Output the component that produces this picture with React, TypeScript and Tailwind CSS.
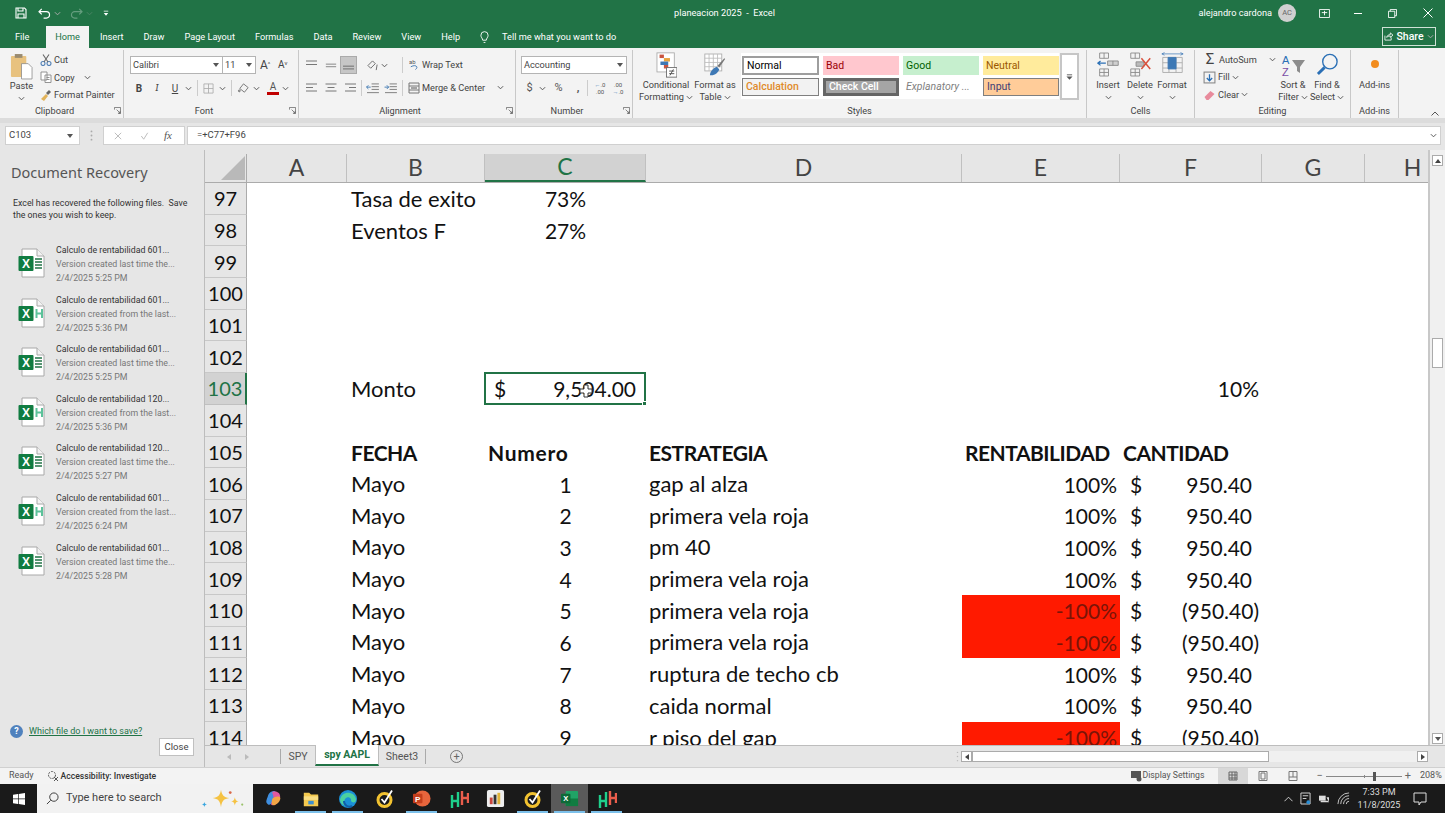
import React from "react";

const UI = "font-['Roboto',sans-serif]";
const SHEET = "font-['Lato',sans-serif]";

function Chev({ className = "" }: { className?: string }) {
  return (
    <svg viewBox="0 0 8 5" className={`w-[7px] h-[5px] shrink-0 ${className}`} fill="none" stroke="#555" strokeWidth="1.1">
      <path d="M1 1l3 3 3-3" />
    </svg>
  );
}
function Down({ className = "" }: { className?: string }) {
  return (
    <svg viewBox="0 0 6 4" className={`w-[6px] h-[4px] shrink-0 ${className}`} fill="#555">
      <path d="M0 0h6L3 4z" />
    </svg>
  );
}
function Lines({ rows, thick }: { rows: number[]; thick?: number }) {
  return (
    <svg viewBox="0 0 14 12" className="w-[14px] h-[12px]" fill="none" stroke="#777" strokeWidth="1">
      {rows.map((w, i) => (
        <path key={i} d={`M${thick === 1 ? 14 - w : thick === 2 ? (14 - w) / 2 : 0} ${2 + i * 3.5}h${w}`} />
      ))}
    </svg>
  );
}

function GroupLabel({ label, launcher }: { label: string; launcher?: boolean }) {
  return (
    <div className={`relative h-[14px] flex items-center justify-center text-[9.2px] leading-none text-[#444] ${launcher ? "pr-[14px]" : ""}`}>
      {label}
      {launcher && (
        <svg viewBox="0 0 8 8" className="absolute right-[2px] top-[3px] w-[7px] h-[7px]" fill="none" stroke="#666" strokeWidth="0.9">
          <path d="M0.5 3V0.5H7.5V7.5H5M3 3l4 4M7 4.5V7H4.5" />
        </svg>
      )}
    </div>
  );
}

function Group({ w, label, launcher, children }: { w: number; label: string; launcher?: boolean; children: React.ReactNode }) {
  return (
    <div style={{ width: w }} className="h-[68px] shrink-0 flex flex-col border-r border-[#c8c8c8]">
      <div className="flex-1 min-h-0 flex">{children}</div>
      <GroupLabel label={label} launcher={launcher} />
    </div>
  );
}

function BigBtn({ w, icon, l1, l2 }: { w: number; icon: React.ReactNode; l1: string; l2?: string }) {
  return (
    <div style={{ width: w }} className="shrink-0 flex flex-col items-center text-[9.2px] leading-[12px] text-[#444]">
      <div className="h-[28px] flex items-center justify-center">{icon}</div>
      <div className="whitespace-nowrap mt-[1px]">{l1}</div>
      {l2 ? (
        <div className="flex items-center gap-[2px] whitespace-nowrap">
          {l2}
          <Chev />
        </div>
      ) : (
        <div className="h-[12px] flex items-center"><Chev /></div>
      )}
    </div>
  );
}

function StyleBox({ label, cls }: { label: string; cls: string }) {
  return <div className={`w-[76px] flex items-center px-[3px] text-[10.5px] whitespace-nowrap overflow-hidden ${cls}`}>{label}</div>;
}

function CellsIcon({ kind }: { kind: string }) {
  return (
    <svg viewBox="0 0 26 28" className="w-[23px] h-[25px]" fill="none" stroke="#888" strokeWidth="1">
      {kind === "insert" && (
        <>
          <path d="M3 1h10v6H3zM8 1v6M3 19h10v8H3zM8 19v8M3 23h10" />
          <path d="M12 10h12v5H12zM18 10v5" fill="#cfcfcf" />
          <path d="M1 12.5h9M4 10l-3 2.5L4 15" stroke="#2a6fb5" strokeWidth="1.4" />
        </>
      )}
      {kind === "delete" && (
        <>
          <path d="M2 1h10v6H2zM7 1v6M2 19h10v8H2zM7 19v8M2 23h10" />
          <path d="M8 11h9v5H8z" fill="#bbb" />
          <path d="M14 7l10 12M24 7L14 19" stroke="#d9513d" strokeWidth="1.7" />
        </>
      )}
      {kind === "format" && (
        <>
          <path d="M2 6h22v17H2zM2 12h22M2 18h22M9 6v17M17 6v17" stroke="#aaa" />
          <path d="M8 6h9v13H8z" fill="#3e79b5" stroke="#3e79b5" />
          <path d="M1 2h24M1 2l3-1.5M1 2l3 1.5M25 2l-3-1.5M25 2l-3 1.5" stroke="#3e79b5" strokeWidth="0.8" />
        </>
      )}
    </svg>
  );
}

function Ribbon() {
  return (
    <div className={`h-[70px] bg-[#f3f3f3] flex pt-[2px] ${UI}`}>
      {/* Clipboard */}
      <Group w={124} label="Clipboard" launcher>
        <div className="w-[40px] pl-[3px] flex flex-col items-center text-[9.2px] text-[#444] leading-[12px]">
          <svg viewBox="0 0 24 28" className="w-[23px] h-[27px] mt-[3px]">
            <rect x="1" y="3" width="16" height="22" rx="1" fill="#e8c27f" />
            <rect x="5" y="1" width="8" height="4" fill="#9a8b70" />
            <path d="M12 11h7l4 4v12H12z" fill="#fff" stroke="#888" strokeWidth="0.8" />
          </svg>
          <div>Paste</div>
          <div className="h-[12px] flex items-center"><Chev /></div>
        </div>
        <div className="flex flex-col text-[9.2px] text-[#444] leading-[17px] pt-[1px]">
          <div className="flex items-center gap-[2px] h-[17.5px]">
            <svg viewBox="0 0 12 12" className="w-[12px] h-[12px]" fill="none" stroke="#4f7fb5" strokeWidth="1.1"><circle cx="3" cy="9.5" r="2" /><circle cx="9" cy="9.500" r="2" /><path d="M4 8L9 0.5M8 8L3 0.5" stroke="#666" /></svg>
            Cut
          </div>
          <div className="flex items-center gap-[2px] h-[17.5px]">
            <svg viewBox="0 0 12 12" className="w-[12px] h-[12px]" fill="#fff" stroke="#888" strokeWidth="0.9"><path d="M1 1h6v8H1zM5 4h6v7.5H5z" /><path d="M6.5 6.5h3M6.5 8.5h3" /></svg>
            <span>Copy</span>
            <Chev className="ml-[7px]" />
          </div>
          <div className="flex items-center gap-[2px] h-[17.5px] whitespace-nowrap">
            <svg viewBox="0 0 12 12" className="w-[12px] h-[12px]"><path d="M1 10l5-5 2 2-4 5z" fill="#e2b35a" /><path d="M6 4l3-3 2 2-3 3z" fill="#666" /></svg>
            Format Painter
          </div>
        </div>
      </Group>

      {/* Font */}
      <Group w={175} label="Font" launcher>
        <div className="pl-[6px] pt-[6px] flex flex-col">
          <div className="flex items-center h-[18px]">
            <div className="w-[93px] h-[18px] bg-white border border-[#b4b4b4] flex items-center justify-between px-[2px] text-[9.2px] text-[#444]">Calibri<Down className="mr-[1px]" /></div>
            <div className="w-[33px] h-[18px] bg-white border border-l-0 border-[#b4b4b4] flex items-center justify-between px-[2px] text-[9.2px] text-[#444]">11<Down className="mr-[1px]" /></div>
            <span className="ml-[4px] text-[12px] text-[#444] w-[18px] leading-none">A<sup className="text-[6px]">^</sup></span>
            <span className="text-[10px] text-[#444] leading-none">A<sup className="text-[6px]">v</sup></span>
          </div>
          <div className="flex items-center h-[18px] mt-[5px] text-[10px] text-[#444]">
            <b className="w-[18px] text-center">B</b>
            <i className="w-[18px] text-center font-serif">I</i>
            <u className="w-[18px] text-center">U</u>
            <Chev className="ml-[1px]" />
            <div className="w-px h-[16px] bg-[#ccc] ml-[5px]" />
            <svg viewBox="0 0 12 12" className="w-[11px] h-[11px] ml-[5px]" fill="none" stroke="#aaa" strokeWidth="0.9"><path d="M1 1h10v10H1zM6 1v10M1 6h10" /></svg>
            <Chev className="ml-[5px]" />
            <div className="w-px h-[16px] bg-[#ccc] ml-[5px]" />
            <svg viewBox="0 0 14 14" className="w-[13px] h-[13px] ml-[5px]" fill="none" stroke="#666" strokeWidth="0.9"><path d="M3 7l4-5 5 4-4 5z" /><path d="M1 13h10" stroke="#f2f2f2" strokeWidth="2" /><circle cx="2.5" cy="9.5" r="1" fill="#bbb" /></svg>
            <Chev className="ml-[3px]" />
            <span className="ml-[7px] w-[12px] flex flex-col items-center leading-[10px] text-[#555]">A<span className="block w-[12px] h-[3px] bg-[#c00000]" /></span>
            <Chev className="ml-[3px]" />
          </div>
        </div>
      </Group>

      {/* Alignment */}
      <Group w={217} label="Alignment" launcher>
        <div className="pl-[5px] pt-[5px] flex flex-col">
          <div className="flex items-center h-[20px]">
            <div className="w-[18px] flex justify-center"><Lines rows={[11, 11]} /></div>
            <div className="w-[18px] flex justify-center"><svg viewBox="0 0 14 12" className="w-[12px] h-[12px]" fill="none" stroke="#777"><path d="M1 5h12M1 8h12" /></svg></div>
            <div className="w-[17px] h-[18px] bg-[#c6c6c6] border border-[#aaa] flex items-end justify-center pb-[2px]"><svg viewBox="0 0 12 6" className="w-[11px] h-[6px]" fill="none" stroke="#666"><path d="M0 1h12M0 4h12" /></svg></div>
            <div className="w-[24px] flex justify-center ml-[8px] items-center gap-[2px]">
              <svg viewBox="0 0 13 12" className="w-[12px] h-[11px]" fill="none" stroke="#666"><path d="M1 6l5-5 3 3-5 5zM11 5l-1 6" /></svg>
              <Chev />
            </div>
            <div className="w-px h-[16px] bg-[#ccc] ml-[13px]" />
            <div className="ml-[6px] flex items-center gap-[2px] text-[9.2px] text-[#444] whitespace-nowrap">
              <svg viewBox="0 0 12 13" className="w-[11px] h-[13px]" fill="none" stroke="#666"><text x="0" y="6" fontSize="6.5" fill="#555" stroke="none">ab</text><path d="M2 9c5-3 9 0 5 3" stroke="#3c76b0" /></svg>
              Wrap Text
            </div>
          </div>
          <div className="flex items-center h-[20px] mt-[3px]">
            <div className="w-[18px] flex justify-center"><Lines rows={[11, 7, 11]} /></div>
            <div className="w-[18px] flex justify-center"><Lines rows={[11, 7, 11]} thick={2} /></div>
            <div className="w-[17px] flex justify-center"><Lines rows={[11, 7, 11]} thick={1} /></div>
            <div className="w-px h-[16px] bg-[#ccc] ml-[4px]" />
            <div className="w-[18px] flex justify-center ml-[1px]"><svg viewBox="0 0 14 12" className="w-[13px] h-[11px]" fill="none" stroke="#777"><path d="M6 1h8M6 4h8M6 7h8M1 10.5h13" /><path d="M5 4.5H0.5M2.5 2.5l-2 2 2 2" stroke="#3c76b0" /></svg></div>
            <div className="w-[18px] flex justify-center"><svg viewBox="0 0 14 12" className="w-[13px] h-[11px]" fill="none" stroke="#777"><path d="M6 1h8M6 4h8M6 7h8M1 10.5h13" /><path d="M0.5 4.5H5M3 2.5l2 2-2 2" stroke="#3c76b0" /></svg></div>
            <div className="w-px h-[16px] bg-[#ccc] ml-[3px]" />
            <div className="ml-[5px] flex items-center gap-[2px] text-[9.2px] text-[#444] whitespace-nowrap">
              <svg viewBox="0 0 12 12" className="w-[12px] h-[12px]" fill="none" stroke="#777"><path d="M1 1h10v10H1zM1 4h10M1 8h10" /><path d="M3 6h6" stroke="#555" /></svg>
              Merge &amp; Center
              <Chev className="ml-[10px]" />
            </div>
          </div>
        </div>
      </Group>

      {/* Number */}
      <Group w={117} label="Number" launcher>
        <div className="pl-[5px] pt-[6px] flex flex-col">
          <div className="w-[106px] h-[18px] bg-white border border-[#b4b4b4] flex items-center justify-between px-[2px] text-[9.2px] text-[#444]">Accounting<Down className="mr-[1px]" /></div>
          <div className="flex items-center h-[18px] mt-[5px] text-[11px] text-[#555]">
            <span className="ml-[4px] w-[9px] text-center">$</span>
            <Chev className="ml-[5px]" />
            <span className="ml-[6px] w-[13px] text-center">%</span>
            <b className="ml-[10px] w-[6px] text-center">,</b>
            <div className="w-px h-[16px] bg-[#ccc] ml-[6px]" />
            <span className="ml-[5px] w-[14px] text-[6px] leading-[7px] text-center"><span className="text-[#3c76b0]">←</span>.0<br />.00</span>
            <span className="ml-[4px] w-[14px] text-[6px] leading-[7px] text-center">.00<br /><span className="text-[#3c76b0]">→</span>.0</span>
          </div>
        </div>
      </Group>

      {/* Styles */}
      <Group w={454} label="Styles">
        <div className="pl-[6px] flex">
          <BigBtn
            w={54}
            l1="Conditional"
            l2="Formatting"
            icon={
              <svg viewBox="0 0 24 30" className="w-[21px] h-[26px] mt-[1px]">
                <rect x="1" y="1" width="20" height="22" fill="#fff" stroke="#aaa" />
                <rect x="4" y="3" width="5" height="4" fill="#c9553f" />
                <rect x="9" y="7" width="7" height="4" fill="#e8a33d" />
                <rect x="5" y="11" width="9" height="4" fill="#3e79b5" />
                <rect x="9" y="15" width="5" height="4" fill="#c9553f" />
                <rect x="12" y="18" width="12" height="11" fill="#fff" stroke="#666" />
                <path d="M15 22h6M15 25h6M20 20l-4 7" stroke="#444" fill="none" />
              </svg>
            }
          />
          <BigBtn
            w={44}
            l1="Format as"
            l2="Table"
            icon={
              <svg viewBox="0 0 26 30" className="w-[22px] h-[26px] mt-[1px]">
                <rect x="1" y="2" width="20" height="20" fill="#fff" stroke="#aaa" />
                <path d="M1 7h20M1 12h20M1 17h20M6 2v20M11 2v20M16 2v20" stroke="#bbb" fill="none" />
                <path d="M7 27c0-5 5-9 8-10l3 3c-1 4-6 8-11 7z" fill="#3e79b5" />
                <path d="M16 16l8-9 1 1-7 10z" fill="#777" />
              </svg>
            }
          />
          <div className="ml-[4px] mt-[3px] w-[318px] h-[46px] bg-white flex flex-col gap-[3px] pl-[1px] pt-[3px]">
            <div className="flex gap-[4px] h-[19px]">
              <StyleBox label="Normal" cls="bg-white border-2 border-[#9e9e9e] text-black !w-[77px]" />
              <StyleBox label="Bad" cls="bg-[#ffc7ce] text-[#9c0006]" />
              <StyleBox label="Good" cls="bg-[#c6efce] text-[#006100]" />
              <StyleBox label="Neutral" cls="bg-[#ffeb9c] text-[#9c5700]" />
            </div>
            <div className="flex gap-[4px] h-[18px]">
              <StyleBox label="Calculation" cls="bg-[#f2f2f2] border border-[#7f7f7f] text-[#e08a2a] font-medium !w-[77px]" />
              <StyleBox label="Check Cell" cls="bg-[#a5a5a5] border-[3px] border-[#666] text-white font-medium" />
              <StyleBox label="Explanatory ..." cls="bg-white text-[#7f7f7f] italic" />
              <StyleBox label="Input" cls="bg-[#ffcc99] border border-[#7f7f7f] text-[#3f3f76]" />
            </div>
          </div>
          <div className="w-[19px] h-[47px] mt-[3px] ml-[1px] border-2 border-[#c6c6c6] bg-white flex flex-col items-center justify-center">
            <svg viewBox="0 0 8 6" className="w-[7px] h-[6px]"><path d="M1 0.5h6" stroke="#555" /><path d="M0.5 2.5h7L4 6z" fill="#555" /></svg>
          </div>
        </div>
      </Group>

      {/* Cells */}
      <Group w={108} label="Cells">
        <div className="pl-[5px] flex">
          <BigBtn w={32} l1="Insert" icon={<CellsIcon kind="insert" />} />
          <BigBtn w={32} l1="Delete" icon={<CellsIcon kind="delete" />} />
          <BigBtn w={32} l1="Format" icon={<CellsIcon kind="format" />} />
        </div>
      </Group>

      {/* Editing */}
      <Group w={156} label="Editing">
        <div className="pl-[8px] flex">
          <div className="w-[73px] flex flex-col text-[9.2px] text-[#444] pt-[1px]">
            <div className="h-[17.5px] flex items-center gap-[2px]"><span className="w-[14px] text-[15px] leading-none text-center text-[#444]">Σ</span>AutoSum<Chev className="ml-[10px]" /></div>
            <div className="h-[17.5px] flex items-center gap-[2px]">
              <svg viewBox="0 0 12 12" className="w-[13px] h-[13px]" fill="none"><rect x="1" y="1" width="10" height="10" stroke="#888" /><path d="M6 3v6M3.5 6.5L6 9l2.5-2.5" stroke="#2a6fb5" strokeWidth="1.2" /></svg>
              Fill<Chev />
            </div>
            <div className="h-[17.5px] flex items-center gap-[2px]">
              <svg viewBox="0 0 12 12" className="w-[13px] h-[12px]"><path d="M1 8l6-6 4 3-6 6H3z" fill="#e88b9c" /></svg>
              Clear<Chev />
            </div>
          </div>
          <BigBtn
            w={34}
            l1="Sort &"
            l2="Filter"
            icon={
              <svg viewBox="0 0 24 24" className="w-[24px] h-[24px] mt-[1px]">
                <text x="1" y="11" fontSize="11" fill="#2a6fb5" fontFamily="Liberation Sans">A</text>
                <text x="1" y="23" fontSize="11" fill="#7a4ea5" fontFamily="Liberation Sans">Z</text>
                <path d="M11 7h13l-5 7v6l-3-2v-4z" fill="#8c8c8c" />
              </svg>
            }
          />
          <BigBtn
            w={34}
            l1="Find &"
            l2="Select"
            icon={
              <svg viewBox="0 0 24 24" className="w-[23px] h-[23px] mt-[1px]" fill="none">
                <circle cx="14.5" cy="9" r="7.5" stroke="#2a6fb5" strokeWidth="1.4" />
                <path d="M9 15l-7 7" stroke="#2a6fb5" strokeWidth="3" />
              </svg>
            }
          />
        </div>
      </Group>

      {/* Add-ins */}
      <Group w={48} label="Add-ins">
        <div className="w-full flex flex-col items-center text-[9.2px] text-[#444] leading-[12px]">
          <div className="h-[28px] flex items-center"><span className="block w-[8px] h-[8px] rounded-full bg-[#f28c1e]" /></div>
          <span className="mt-[1px]">Add-ins</span>
        </div>
      </Group>
      <div className="flex-1 relative">
        <svg viewBox="0 0 8 5" className="absolute right-[6px] bottom-[2px] w-[8px] h-[5px]" fill="none" stroke="#555"><path d="M0.5 4.5L4 1l3.5 3.5" /></svg>
      </div>
    </div>
  );
}

function TitleBar() {
  return (
    <div className={`h-[26px] flex items-center text-white ${UI}`}>
      <div className="w-[674px] flex items-center pl-[15px]">
        <svg viewBox="0 0 12 12" className="w-[12px] h-[12px]" fill="none" stroke="#fff" strokeWidth="1.1"><path d="M1 1h8.5L11 2.5V11H1zM3 1v3h5V1M3 11V7h6v4" /></svg>
        <svg viewBox="0 0 14 12" className="w-[13px] h-[11px] ml-[11px]" fill="none" stroke="#fff" strokeWidth="1.3"><path d="M4 1L1 4l3 3M1 4h8a3.5 3.5 0 0 1 0 7H6" /></svg>
        <Chev className="ml-[3px] invert" />
        <svg viewBox="0 0 14 12" className="w-[13px] h-[11px] ml-[9px] opacity-30" fill="none" stroke="#fff" strokeWidth="1.3"><path d="M10 1l3 3-3 3M13 4H5a3.5 3.5 0 0 0 0 7h3" /></svg>
        <Chev className="ml-[3px] opacity-30 invert" />
        <svg viewBox="0 0 8 8" className="w-[6px] h-[6px] ml-[10px]" fill="#fff"><path d="M1 1h6v1H1zM1 4h6L4 7.5z" /></svg>
      </div>
      <div className="text-[9.2px] whitespace-nowrap">planeacion 2025 &nbsp;-&nbsp; Excel</div>
      <div className="ml-auto flex items-center">
        <span className="text-[9.2px] mr-[6px]">alejandro cardona</span>
        <span className="w-[18px] h-[18px] rounded-full bg-[#d0d0d0] text-[#666] text-[7.5px] flex items-center justify-center">AC</span>
        <svg viewBox="0 0 12 10" className="w-[11px] h-[9px] ml-[23px]" fill="none" stroke="#fff"><path d="M0.5 0.5h11v9H0.5z" /><path d="M3 4h6M6 2v5" /></svg>
        <div className="w-[8px] h-px bg-white ml-[24px]" />
        <svg viewBox="0 0 10 10" className="w-[9px] h-[9px] ml-[26px]" fill="none" stroke="#fff"><path d="M0.5 2.5h7v7h-7zM2.5 2.5v-2h7v7h-2" /></svg>
        <svg viewBox="0 0 10 10" className="w-[10px] h-[10px] ml-[26px] mr-[12px]" fill="none" stroke="#fff"><path d="M0.5 0.5l9 9M9.5 0.5l-9 9" /></svg>
      </div>
    </div>
  );
}

const TABS = ["Insert", "Draw", "Page Layout", "Formulas", "Data", "Review", "View", "Help"];

function TabBar() {
  return (
    <div className={`h-[22px] flex items-end text-[9.2px] text-white ${UI}`}>
      <div className="h-full flex items-center pl-[15px] w-[46px]">File</div>
      <div className="h-[22px] w-[43px] bg-[#f3f3f3] text-[#217346] flex items-center justify-center">Home</div>
      <div className="h-full flex items-center gap-[20px] pl-[11px]">
        {TABS.map((t) => (
          <span key={t} className="whitespace-nowrap">{t}</span>
        ))}
        <svg viewBox="0 0 10 14" className="w-[9px] h-[13px]" fill="none" stroke="#fff"><path d="M3 10c0-2-2-3-2-5.5a4 4 0 0 1 8 0C9 7 7 8 7 10zM4 12.5h2" /></svg>
        <span className="-ml-[7px] whitespace-nowrap">Tell me what you want to do</span>
      </div>
      <div className="ml-auto mr-[9px] mb-[1px] w-[54px] h-[19px] border border-[#cfe2d6] flex items-center justify-center gap-[3px] self-center">
        <svg viewBox="0 0 10 10" className="w-[9px] h-[9px]" fill="none" stroke="#fff" strokeWidth="0.9"><path d="M1 4v5h7V6M3 6c0-2 2-3 4-3V1l3 2.500L7 6V4.500C5 4.500 4 5 3 6z" /></svg>
        <span className="text-[10.5px] font-medium">Share</span>
        <Chev className="invert" />
      </div>
    </div>
  );
}

function FormulaBar() {
  return (
    <div className={`h-[32px] border-t-[5px] border-[#dcdcdc] bg-[#e6e6e6] flex items-start pt-[3px] text-[9.5px] text-[#444] pl-[5px] pr-[4px] ${UI}`}>
      <div className="w-[75px] h-[19px] bg-white border border-[#d0d0d0] flex items-center justify-between px-[3px]">C103<Down className="mr-[3px]" /></div>
      <svg viewBox="0 0 3 12" className="w-[3px] h-[11px] ml-[10px] mt-[4px]" fill="#aaa"><circle cx="1.5" cy="1.5" r="1" /><circle cx="1.5" cy="6" r="1" /><circle cx="1.5" cy="10.5" r="1" /></svg>
      <div className="w-[82px] h-[19px] ml-[10px] bg-white border border-[#d0d0d0] flex items-center">
        <svg viewBox="0 0 10 10" className="w-[8px] h-[8px] ml-[10px]" fill="none" stroke="#bbb" strokeWidth="1.2"><path d="M1 1l8 8M9 1l-8 8" /></svg>
        <svg viewBox="0 0 10 10" className="w-[9px] h-[8px] ml-[18px]" fill="none" stroke="#bbb" strokeWidth="1.2"><path d="M1 5l3 4 5-8" /></svg>
        <i className="ml-[15px] font-['Liberation_Serif',serif] text-[11px] text-[#555]">fx</i>
      </div>
      <div className="flex-1 h-[19px] ml-[2px] bg-white border border-[#d0d0d0] flex items-center justify-between pl-[9px] pr-[3px]">
        =+C77+F96
        <Chev />
      </div>
    </div>
  );
}

function ExcelFile({ h }: { h?: boolean }) {
  return (
    <svg viewBox="0 0 27 30" className="w-[27px] h-[30px] shrink-0">
      <path d="M4 1h15l7 7v21H4z" fill="#fff" stroke="#a8a8a8" />
      <path d="M19 1v7h7" fill="#f2f2f2" stroke="#a8a8a8" />
      {h ? (
        <path d="M18.5 11v9M24 11v9M18.5 15.5H24" stroke="#5cc29a" strokeWidth="2" fill="none" />
      ) : (
        <path d="M17 11h7M17 14h7M17 17h7M17 20h7" stroke="#217346" strokeWidth="1.4" />
      )}
      <rect x="0.5" y="8" width="15" height="15" rx="1" fill="#107c41" />
      <text x="8" y="20" fontSize="12" fontWeight="700" fill="#fff" textAnchor="middle" fontFamily="Liberation Sans">X</text>
    </svg>
  );
}

const RECOVERY: [string, string, string, boolean][] = [
  ["Calculo de rentabilidad 601...", "Version created last time the...", "2/4/2025 5:25 PM", false],
  ["Calculo de rentabilidad 601...", "Version created from the last...", "2/4/2025 5:36 PM", true],
  ["Calculo de rentabilidad 601...", "Version created last time the...", "2/4/2025 5:25 PM", false],
  ["Calculo de rentabilidad 120...", "Version created from the last...", "2/4/2025 5:36 PM", true],
  ["Calculo de rentabilidad 120...", "Version created last time the...", "2/4/2025 5:27 PM", false],
  ["Calculo de rentabilidad 601...", "Version created from the last...", "2/4/2025 6:24 PM", true],
  ["Calculo de rentabilidad 601...", "Version created last time the...", "2/4/2025 5:28 PM", false],
];

function RecoveryPanel() {
  return (
    <div className={`w-[205px] shrink-0 bg-[#e6e6e6] border-r border-[#bdbdbd] flex flex-col ${UI}`}>
      <div className="pl-[11px] pt-[12px] text-[14.5px] leading-[20px] text-[#555] font-['Noto_Sans',sans-serif]">Document Recovery</div>
      <div className="pl-[13px] pt-[15px] text-[8.8px] leading-[12px] text-[#333] whitespace-nowrap">
        Excel has recovered the following files.&nbsp; Save<br />the ones you wish to keep.
      </div>
      <div className="pt-[22px] pl-[18px] flex flex-col">
        {RECOVERY.map((r, i) => (
          <div key={i} className="h-[49.6px] flex">
            <div className="pt-[5px]"><ExcelFile h={r[3]} /></div>
            <div className="pl-[11px] text-[8.8px] leading-[14px] whitespace-nowrap">
              <div className="text-[#333]">{r[0]}</div>
              <div className="text-[#777]">{r[1]}</div>
              <div className="text-[#777]">{r[2]}</div>
            </div>
          </div>
        ))}
      </div>
      <div className="mt-auto pl-[10px] pb-[11px] flex items-end justify-between pr-[10px]">
        <div className="flex items-center gap-[6px] mb-[18px]">
          <span className="w-[13px] h-[13px] rounded-full bg-[#4f81bd] text-white text-[9px] font-bold flex items-center justify-center">?</span>
          <span className="text-[9px] text-[#217346] underline whitespace-nowrap">Which file do I want to save?</span>
        </div>
        <div className="w-[35px] h-[18px] bg-white border border-[#c0c0c0] text-[9.5px] text-[#444] flex items-center justify-center">Close</div>
      </div>
    </div>
  );
}

const COLS = "grid-cols-[100px_138px_161px_316px_158px_142px_103px_96px]";
const HEAD = ["A", "B", "C", "D", "E", "F", "G", "H"];
const HB = "text-[21px] tracking-[-0.5px]";
const NUM = "text-[21px]";

type Row = { n: number; b?: string; c?: string; d?: string; e?: string; f?: string; neg?: boolean; head?: boolean; cantidad?: string };

const data: Row[] = [
  { n: 97, b: "Tasa de exito", c: "73%" },
  { n: 98, b: "Eventos F", c: "27%" },
  { n: 99 },
  { n: 100 },
  { n: 101 },
  { n: 102 },
  { n: 103, b: "Monto" },
  { n: 104 },
  { n: 105, head: true, b: "FECHA", c: "Numero", d: "ESTRATEGIA", e: "RENTABILIDAD", cantidad: "CANTIDAD" },
  { n: 106, b: "Mayo", c: "1", d: "gap al alza", e: "100%", f: "950.40" },
  { n: 107, b: "Mayo", c: "2", d: "primera vela roja", e: "100%", f: "950.40" },
  { n: 108, b: "Mayo", c: "3", d: "pm 40", e: "100%", f: "950.40" },
  { n: 109, b: "Mayo", c: "4", d: "primera vela roja", e: "100%", f: "950.40" },
  { n: 110, b: "Mayo", c: "5", d: "primera vela roja", e: "-100%", f: "(950.40)", neg: true },
  { n: 111, b: "Mayo", c: "6", d: "primera vela roja", e: "-100%", f: "(950.40)", neg: true },
  { n: 112, b: "Mayo", c: "7", d: "ruptura de techo cb", e: "100%", f: "950.40" },
  { n: 113, b: "Mayo", c: "8", d: "caida normal", e: "100%", f: "950.40" },
  { n: 114, b: "Mayo", c: "9", d: "r piso del gap", e: "-100%", f: "(950.40)", neg: true },
];

function Sheet() {
  return (
    <div className={`flex-1 min-w-0 flex flex-col ${SHEET}`}>
      <div className="h-[595px] flex">
        <div className="flex-1 min-w-0 flex flex-col pt-[4px] bg-[#e6e6e6]">
          {/* Column headers */}
          <div className="flex h-[29px] border-b border-[#ababab] shrink-0">
            <div className="w-[42px] shrink-0 relative border-r border-[#ababab]">
              <svg viewBox="0 0 24 24" className="absolute right-[1px] bottom-[2px] w-[24px] h-[24px]"><path d="M24 0v24H0z" fill="#b9b9b9" /></svg>
            </div>
            <div className={`flex-1 min-w-0 overflow-hidden grid grid-rows-[28px] leading-none ${COLS}`}>
              {HEAD.map((h) => (
                <div key={h} className={`h-[28px] flex items-center justify-center text-[23px] pb-[1px] border-r border-[#c0c0c0] ${h === "C" ? "bg-[#d2d2d2] border-b-2 border-b-[#217346] text-[#217346]" : "text-[#444]"}`}>
                  {h}
                </div>
              ))}
            </div>
          </div>
          {/* Rows */}
          <div className="flex-1 min-h-0 overflow-hidden bg-white flex flex-col">
            {data.map((r) => (
              <div key={r.n} className="flex h-[31.7px] shrink-0 text-[22px] leading-none text-[#111]">
                <div className={`w-[42px] shrink-0 flex items-center justify-center border-r border-b text-[20px] ${r.n === 103 ? "bg-[#d2d2d2] border-r-2 border-r-[#217346] border-b-[#c0c0c0] text-[#217346]" : "bg-[#e6e6e6] border-r-[#ababab] border-b-[#c8c8c8]"}`}>
                  {r.n}
                </div>
                <div className={`flex-1 min-w-0 overflow-x-clip grid ${COLS} ${r.head ? "font-bold" : ""}`}>
                  <div />
                  <div className={`flex items-center pl-[4px] whitespace-nowrap ${r.head ? HB : ""}`}>{r.b}</div>
                  {r.n === 103 ? (
                    <div className={`relative border-2 border-[#217346] flex items-center justify-between pl-[8px] pr-[8px] z-10 -mt-[1px] -ml-[1px] ${NUM}`}>
                      <span>$</span>
                      <span>9,504.00</span>
                      <span className="absolute -right-[3px] -bottom-[3px] w-[5px] h-[5px] bg-[#217346] border border-white" />
                      <svg viewBox="0 0 14 14" className="absolute left-[93px] top-[10px] w-[14px] h-[14px]"><path d="M5 1h4v4h4v4H9v4H5V9H1V5h4z" fill="#fff" stroke="#333" /></svg>
                    </div>
                  ) : (
                    <div className={`flex items-center whitespace-nowrap ${r.head ? "pl-[3px] text-[21px] tracking-[0.7px]" : `justify-center ${NUM}`}`}>{r.c}</div>
                  )}
                  <div className={`flex items-center pl-[3px] whitespace-nowrap ${r.head ? HB : ""}`}>{r.d}</div>
                  <div className={`flex items-center whitespace-nowrap ${r.head ? `pl-[3px] ${HB}` : `justify-end pr-[3px] ${NUM}`} ${r.neg ? "bg-[#ff1a00] text-[#7a1408]" : ""}`}>{r.e}</div>
                  {r.n === 103 ? (
                    <div className={`flex items-center justify-end pr-[3px] ${NUM}`}>10%</div>
                  ) : r.head ? (
                    <div className={`flex items-center pl-[3px] whitespace-nowrap ${HB}`}>{r.cantidad}</div>
                  ) : r.f ? (
                    <div className={`flex items-center justify-between pl-[10px] ${r.neg ? "pr-[3px]" : "pr-[10px]"} ${NUM}`}>
                      <span>$</span>
                      <span>{r.f}</span>
                    </div>
                  ) : (
                    <div />
                  )}
                </div>
              </div>
            ))}
          </div>
        </div>
        {/* Vertical scrollbar */}
        <div className="w-[17px] shrink-0 bg-[#f0f0f0] border-l-2 border-[#c8c8c8] flex flex-col items-center pt-[5px] pb-[1px]">
          <div className="w-[11px] h-[11px] bg-white border border-[#ababab] flex items-center justify-center"><svg viewBox="0 0 6 4" className="w-[6px] h-[4px]"><path d="M3 0l3 4H0z" fill="#444" /></svg></div>
          <div className="w-[11px] h-[30px] bg-white border border-[#ababab] mt-[172px]" />
          <div className="w-[11px] h-[11px] bg-white border border-[#ababab] flex items-center justify-center mt-auto"><Down /></div>
        </div>
      </div>
      {/* Sheet tabs + h-scroll */}
      <div className={`h-[22px] bg-[#e6e6e6] border-t border-[#bdbdbd] flex items-center text-[10.5px] text-[#555] ${UI}`}>
        <div className="flex items-center w-[75px] pl-[22px] gap-[14px] h-full">
          <svg viewBox="0 0 4 6" className="w-[4px] h-[6px]"><path d="M4 0v6L0 3z" fill="#bbb" /></svg>
          <svg viewBox="0 0 4 6" className="w-[4px] h-[6px]"><path d="M0 0v6l4-3z" fill="#bbb" /></svg>
        </div>
        <div className="h-[15px] w-px bg-[#aaa]" />
        <div className="w-[34px] text-center">SPY</div>
        <div className="w-[64px] h-[21px] -mt-[2px] bg-white border-x border-[#bdbdbd] border-b-2 border-b-[#217346] text-[#217346] font-bold flex items-center justify-center whitespace-nowrap">spy AAPL</div>
        <div className="w-[46px] text-center">Sheet3</div>
        <div className="h-[15px] w-px bg-[#aaa]" />
        <div className="ml-[24px] w-[13px] h-[13px] rounded-full border border-[#777] flex items-center justify-center text-[11px] leading-none text-[#666]">+</div>
        <svg viewBox="0 0 3 12" className="w-[3px] h-[11px] ml-[493px]" fill="#bbb"><circle cx="1.5" cy="1.5" r="0.8" /><circle cx="1.5" cy="6" r="0.8" /><circle cx="1.5" cy="10.5" r="0.8" /></svg>
        <div className="ml-[2px] w-[467px] h-[11px] bg-[#f0f0f0] flex items-stretch">
          <div className="w-[11px] bg-white border border-[#ababab] flex items-center justify-center"><svg viewBox="0 0 4 6" className="w-[4px] h-[6px]"><path d="M4 0v6L0 3z" fill="#444" /></svg></div>
          <div className="w-[297px] bg-white border border-[#ababab]" />
          <div className="w-[11px] ml-auto bg-white border border-[#ababab] flex items-center justify-center"><svg viewBox="0 0 4 6" className="w-[4px] h-[6px]"><path d="M0 0v6l4-3z" fill="#444" /></svg></div>
        </div>
      </div>
    </div>
  );
}

function StatusBar() {
  return (
    <div className={`h-[17px] bg-[#f3f3f3] border-t border-[#d0d0d0] flex items-center text-[9px] text-[#555] ${UI}`}>
      <span className="ml-[9px]">Ready</span>
      <svg viewBox="0 0 12 12" className="w-[12px] h-[12px] ml-[13px]" fill="none" stroke="#555"><circle cx="5" cy="5" r="3.5" strokeDasharray="2 1" /><path d="M7 7l4 4M11 7l-4 4" /></svg>
      <b className="ml-[2px] text-[#333] font-medium text-[8.6px]">Accessibility: Investigate</b>
      <div className="ml-auto flex items-center h-full">
        <svg viewBox="0 0 12 12" className="w-[12px] h-[12px]" fill="#555"><rect x="1" y="1" width="10" height="7" /><circle cx="9" cy="9" r="2.5" /></svg>
        <span className="ml-[1px] mr-[14px] text-[8.7px] text-[#555]">Display Settings</span>
        <div className="w-[30px] h-full bg-[#d8d8d8] flex items-center justify-center">
          <svg viewBox="0 0 10 10" className="w-[10px] h-[10px]" fill="none" stroke="#666"><path d="M1 1h8v8H1zM1 4h8M1 7h8M4 1v8M7 1v8" /></svg>
        </div>
        <div className="w-[30px] flex justify-center"><svg viewBox="0 0 10 10" className="w-[10px] h-[10px]" fill="none" stroke="#777"><path d="M1 0.5h8v9H1zM3 2h4v6H3z" /></svg></div>
        <div className="w-[30px] flex justify-center"><svg viewBox="0 0 10 10" className="w-[10px] h-[10px]" fill="none" stroke="#777"><path d="M1 0.5h8v9H1zM1 6h8M5 0.5V6" /></svg></div>
        <span className="ml-[8px] text-[11px] text-[#666]">−</span>
        <div className="relative w-[76px] h-px bg-[#888] mx-[3px]">
          <span className="absolute left-[47px] -top-[4px] w-[3px] h-[9px] bg-[#555]" />
          <span className="absolute left-[38px] -top-[1px] w-px h-[3px] bg-[#888]" />
        </div>
        <span className="text-[11px] text-[#666]">+</span>
        <span className="ml-[9px] mr-[3px] w-[22px] text-[9px]">208%</span>
      </div>
    </div>
  );
}

function Bars() {
  return (
    <svg viewBox="0 0 20 20" className="w-[20px] h-[20px]" fill="none" strokeWidth="2.4">
      <path d="M3 6v13M9 3v15M3 12h6" stroke="#1ed08c" />
      <path d="M13 2v14M19 4v10M13 9h6" stroke="#ea5d4c" />
    </svg>
  );
}
function Norton() {
  return (
    <svg viewBox="0 0 20 20" className="w-[20px] h-[20px]" fill="none">
      <circle cx="9.5" cy="11" r="6.5" stroke="#f2c230" strokeWidth="3" />
      <path d="M6.5 10l3 3.5L17 1.5" stroke="#fff" strokeWidth="1.8" />
    </svg>
  );
}

function TaskIcon({ children, on, active }: { children: React.ReactNode; on?: boolean; active?: boolean }) {
  return (
    <div className={`w-[37px] h-full flex items-center justify-center relative shrink-0 ${active ? "bg-[#5a5a5a]" : ""}`}>
      {children}
      {on && <span className="absolute bottom-0 left-[3px] right-[3px] h-[2px] bg-[#7cc0ea]" />}
    </div>
  );
}

function Taskbar() {
  return (
    <div className={`h-[29px] bg-[#1a1a1a] flex items-center text-white ${UI}`}>
      <div className="w-[37px] flex justify-center">
        <svg viewBox="0 0 12 12" className="w-[12px] h-[12px]" fill="#fff"><path d="M0 1.8L5 1v4.6H0zM5.7 0.9L12 0v5.6H5.7zM0 6.3h5v4.7l-5-.8zM5.7 6.3H12V12l-6.3-.9z" /></svg>
      </div>
      <div className="w-[216px] h-full bg-[#f2f2f2] flex items-center text-[#444] text-[11px] pl-[9px] relative">
        <svg viewBox="0 0 14 14" className="w-[13px] h-[13px]" fill="none" stroke="#333"><circle cx="8.5" cy="5.5" r="4.5" /><path d="M5 9l-4 4" /></svg>
        <span className="ml-[7px]">Type here to search</span>
        <svg viewBox="0 0 52 24" className="absolute right-[8px] top-[3px] w-[48px] h-[24px]">
          <path d="M26 2c1 6 3 8 9 9-6 1-8 3-9 10-1-7-3-9-9-10 6-1 8-3 9-9z" fill="#f5c242" />
          <path d="M41 10c.5 3 1.500 4 4 4.500-2.500.5-3.500 1.500-4 4.500-.5-3-1.500-4-4-4.500 2.500-.5 3.500-1.500 4-4.500z" fill="#f5c242" />
          <path d="M8 15c.3 2 1 2.700 3 3-2 .3-2.700 1-3 3-.3-2-1-2.700-3-3 2-.3 2.700-1 3-3z" fill="#3ba7e0" />
          <circle cx="36" cy="5" r="1.500" fill="#d9694a" />
          <circle cx="49" cy="18" r="1.200" fill="#9ac26a" />
        </svg>
      </div>
      <div className="flex h-full ml-[2px]">
        <TaskIcon>
          <svg viewBox="0 0 20 20" className="w-[19px] h-[19px]"><path d="M4 8c1-5 5-6 7-6s2 4 0 8-4 8-7 6-1-5 0-8z" fill="#3f8fe0" /><path d="M9 3c3-1 8 0 8 5s-4 9-8 9 1-5 1-8-2-5-1-6z" fill="#e0589e" /><path d="M9 10c2-2 7-3 8-1s-2 7-6 8-3-5-2-7z" fill="#f3a646" /></svg>
        </TaskIcon>
        <TaskIcon on>
          <svg viewBox="0 0 20 20" className="w-[18px] h-[18px]"><path d="M2 3h6l2 2h8v13H2z" fill="#f3c94f" /><rect x="2" y="7" width="16" height="4" fill="#f9df84" /><rect x="7" y="12" width="6" height="4" fill="#3d8fd0" /></svg>
        </TaskIcon>
        <TaskIcon on>
          <svg viewBox="0 0 20 20" className="w-[20px] h-[20px]"><circle cx="10" cy="10" r="9" fill="#1a8fd6" /><path d="M2 11c1-6 6-8 10-7s6 4 6 7c0 3-4 3-5 1 1-3-3-5-5-3-3 2-2 7 2 8-5 0-8-3-8-6z" fill="#4bd0a0" /><path d="M6 12c0 4 4 7 8 5" stroke="#0f5ea8" strokeWidth="2" fill="none" /></svg>
        </TaskIcon>
        <TaskIcon><Norton /></TaskIcon>
        <TaskIcon on>
          <svg viewBox="0 0 20 20" className="w-[19px] h-[19px]"><circle cx="11" cy="10" r="8.500" fill="#e8653c" /><rect x="1" y="5" width="10" height="10" rx="1" fill="#c43e1c" /><text x="6" y="13.500" fontSize="8.500" fontWeight="700" fill="#fff" textAnchor="middle" fontFamily="Liberation Sans">P</text></svg>
        </TaskIcon>
        <TaskIcon><Bars /></TaskIcon>
        <TaskIcon>
          <svg viewBox="0 0 20 20" className="w-[19px] h-[19px]"><rect x="1" y="1" width="18" height="18" rx="2" fill="#eee" /><rect x="4" y="9" width="3" height="7" fill="#c9453c" /><rect x="8" y="6" width="3" height="10" fill="#333" /><rect x="12" y="4" width="3" height="12" fill="#e0b43a" /></svg>
        </TaskIcon>
        <TaskIcon on><Norton /></TaskIcon>
        <TaskIcon on active>
          <svg viewBox="0 0 20 20" className="w-[19px] h-[19px]"><rect x="6" y="2" width="13" height="16" rx="1" fill="#21a366" /><rect x="6" y="10" width="13" height="8" fill="#107c41" /><rect x="1" y="5" width="10" height="10" rx="1" fill="#0d6b38" /><text x="6" y="13" fontSize="8" fontWeight="700" fill="#fff" textAnchor="middle" fontFamily="Liberation Sans">X</text></svg>
        </TaskIcon>
        <TaskIcon on><Bars /></TaskIcon>
      </div>
      <div className="ml-auto flex items-center h-full">
        <svg viewBox="0 0 10 6" className="w-[9px] h-[6px]" fill="none" stroke="#ddd"><path d="M0.5 5.500L5 1l4.500 4.500" /></svg>
        <svg viewBox="0 0 12 14" className="w-[11px] h-[13px] ml-[7px]" fill="none" stroke="#ddd"><path d="M1 1h10v12H1z" /><path d="M3 4h6M3 7h4" /><circle cx="9" cy="11" r="2" fill="#2a8fd6" stroke="none" /></svg>
        <svg viewBox="0 0 14 12" className="w-[12px] h-[10px] ml-[7px]" fill="#ddd"><rect x="1" y="2" width="8" height="6" /><path d="M10 4h3v4H3v2h10z" /></svg>
        <svg viewBox="0 0 14 14" className="w-[13px] h-[13px] ml-[7px]" fill="none" stroke="#ccc"><path d="M1 13a12 12 0 0 1 12-12M4 13a9 9 0 0 1 9-9M7 13a6 6 0 0 1 6-6" /><path d="M10 13a3 3 0 0 1 3-3" /></svg>
        <div className="w-[50px] ml-[4px] flex flex-col items-center text-[9px] leading-[13px] text-[#ddd]">
          <span>7:33 PM</span>
          <span>11/8/2025</span>
        </div>
        <svg viewBox="0 0 14 14" className="w-[14px] h-[14px] ml-[9px] mr-[18px]" fill="none" stroke="#ddd"><path d="M1 1h12v9H8l-2 3v-3H1z" /></svg>
      </div>
    </div>
  );
}

export default function App() {
  return (
    <div className="w-[1445px] h-[813px] overflow-hidden flex flex-col bg-[#217346]">
      <TitleBar />
      <TabBar />
      <Ribbon />
      <FormulaBar />
      <div className="h-[617px] flex bg-[#e6e6e6]">
        <RecoveryPanel />
        <Sheet />
      </div>
      <StatusBar />
      <Taskbar />
    </div>
  );
}
